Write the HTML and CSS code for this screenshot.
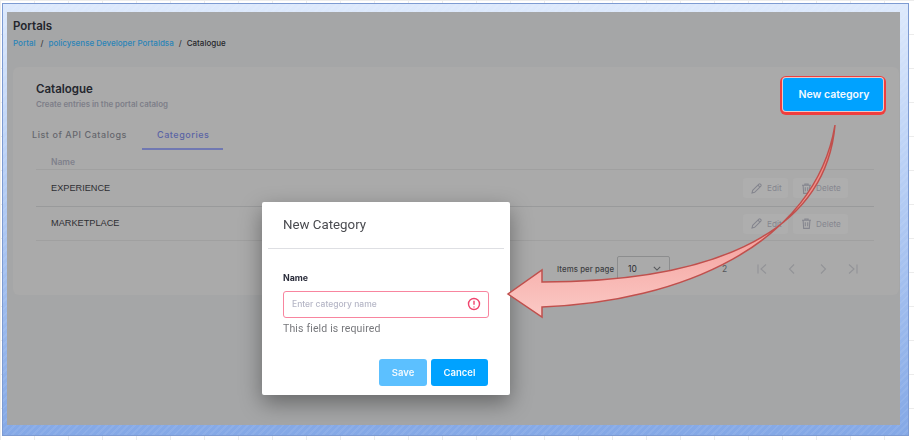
FILE: index.html
```html
<!DOCTYPE html>
<html lang="en">
<head>
<meta charset="utf-8">
<title>Catalogue</title>
<link rel="stylesheet" href="styles.css">
</head>
<body>
<div class="frame">
  <main class="shot">
    <h1 class="page-title">Portals</h1>
    <nav class="crumbs">
      <a>Portal</a><span class="sep">/</span><a>policysense Developer Portaldsa</a><span class="sep">/</span><span class="here">Catalogue</span>
    </nav>
    <section class="card">
      <header class="card-head">
        <div class="card-titles">
          <h2 class="card-title">Catalogue</h2>
          <p class="card-sub">Create entries in the portal catalog</p>
        </div>
        <button class="btn-new">New category</button>
      </header>
      <div class="tabs">
        <span class="tab">List of API Catalogs</span>
        <span class="tab tab-active">Categories</span>
      </div>
      <div class="table">
        <div class="thead">Name</div>
        <div class="row row-tall">
          <span class="cell-name">EXPERIENCE</span>
          <span class="actions">
            <span class="act act-edit"><svg class="ico" viewBox="0 0 16 16"><path d="M2.500 13.500l.8-3.200L11 2.600a1.200 1.200 0 0 1 1.700 0l.7.7a1.200 1.200 0 0 1 0 1.700L5.700 12.700z"/><path d="M9.800 3.800l2.400 2.400"/></svg>Edit</span>
            <span class="act act-del"><svg class="ico" viewBox="0 0 16 16"><path d="M2.500 4h11M6 4V2.500h4V4M3.800 4l.7 10h7l.7-10M6.500 6.500v5M9.500 6.500v5"/></svg>Delete</span>
          </span>
        </div>
        <div class="row row-short">
          <span class="cell-name">MARKETPLACE</span>
          <span class="actions">
            <span class="act act-edit"><svg class="ico" viewBox="0 0 16 16"><path d="M2.500 13.500l.8-3.200L11 2.600a1.200 1.200 0 0 1 1.700 0l.7.7a1.200 1.200 0 0 1 0 1.700L5.700 12.700z"/><path d="M9.800 3.800l2.400 2.400"/></svg>Edit</span>
            <span class="act act-del"><svg class="ico" viewBox="0 0 16 16"><path d="M2.500 4h11M6 4V2.500h4V4M3.800 4l.7 10h7l.7-10M6.500 6.500v5M9.500 6.500v5"/></svg>Delete</span>
          </span>
        </div>
      </div>
      <div class="pager">
        <span class="pager-label">Items per page</span>
        <span class="pager-select">10<svg class="caret" viewBox="0 0 10 6"><path d="M1 1l4 4 4-4"/></svg></span>
        <span class="pager-count">2</span>
        <svg class="pg pg-first" viewBox="0 0 12 12"><path d="M2 1.500v9M10 1.500L5 6l5 4.500"/></svg>
        <svg class="pg pg-prev" viewBox="0 0 12 12"><path d="M8 1.500L3.500 6 8 10.500"/></svg>
        <svg class="pg pg-next" viewBox="0 0 12 12"><path d="M4 1.500L8.500 6 4 10.500"/></svg>
        <svg class="pg pg-last" viewBox="0 0 12 12"><path d="M10 1.500v9M2 1.500L7 6l-5 4.500"/></svg>
      </div>
    </section>
  </main>

  <div class="modal">
    <div class="modal-head">New Category</div>
    <div class="modal-body">
      <label class="field-label">Name</label>
      <div class="input">
        <span class="placeholder">Enter category name</span>
        <svg class="err-ico" viewBox="0 0 14 14"><circle cx="7" cy="7" r="5.500"/><path d="M7 3.800v3.900M7 9.400v1"/></svg>
      </div>
      <p class="err-text">This field is required</p>
      <div class="modal-foot">
        <button class="btn btn-save">Save</button>
        <button class="btn btn-cancel">Cancel</button>
      </div>
    </div>
  </div>
</div>

<svg class="arrow" viewBox="0 0 914 440">
  <defs>
    <linearGradient id="arrowFill" x1="0" y1="0" x2="0" y2="1">
      <stop offset="0" stop-color="#ec7a73"/>
      <stop offset="0.6" stop-color="#f5a5a1"/>
      <stop offset="1" stop-color="#fbcac6"/>
    </linearGradient>
  </defs>
  <path class="arrow-shape" d="M835 125C825 240 700 282 542 282L542 270L508 294L542 317L542 307C680 302 815 245 835 125Z"/>
</svg>
</body>
</html>
```

FILE: styles.css
```css
* { box-sizing: border-box; }
html, body { margin: 0; height: 100%; }
body {
  width: 914px;
  height: 440px;
  overflow: hidden;
  padding: 3px 5px 4px 2px;
  font-family: Inter, "Liberation Sans", sans-serif;
  background-color: #fff;
  background-image:
    linear-gradient(#ececec 1px, transparent 1px),
    linear-gradient(90deg, #ececec 1px, transparent 1px);
  background-size: 34px 34px;
}
h1, h2, p { margin: 0; }
button { font-family: inherit; border: 0; padding: 0; }

.frame {
  position: relative;
  height: 433px;
  padding: 8px 8px 10px 4px;
  border: 1px solid #7d9bd2;
  background:
    repeating-linear-gradient(135deg, rgba(255,255,255,.07) 0 2px, transparent 2px 5px),
    linear-gradient(#dde9fc 0%, #bcd2f6 35%, #84a8e6 100%);
  filter: blur(.4px);
}

.shot {
  height: 413px;
  padding: 8px 1px 0 6px;
  background: #a5a6a7;
}
.page-title { font-size: 11.500px; line-height: 12px; font-weight: 600; color: #23252c; }
.crumbs { display: flex; margin-top: 5px; font-size: 8px; line-height: 12px; font-weight: 500; color: #2a2c30; }
.crumbs a { color: #2a84b8; }
.sep { margin: 0 5px; color: #3b3c40; }
.here { color: #26272b; }

.card {
  height: 228px;
  margin-top: 18px;
  padding: 11px 16px 0 4px;
  border-radius: 6px;
  background: #aaaaaa;
}
.card-head { display: flex; justify-content: space-between; align-items: flex-start; padding-left: 19px; }
.card-titles { padding-top: 4px; }
.card-title { font-size: 11.500px; line-height: 14px; font-weight: 600; color: #24262e; }
.card-sub { margin-top: 3px; font-size: 7.900px; line-height: 10px; font-weight: 600; color: #7d7e88; }
.btn-new {
  width: 100px;
  height: 33px;
  padding-left: 2px;
  border-radius: 3px;
  background: #00a2ff;
  color: #f2f9ff;
  font-size: 10.500px;
  font-weight: 600;
  box-shadow: 0 0 0 1px #e9c9c9, 0 1px 0 3px #f03e3e;
}

.tabs { display: flex; margin-top: 14px; font-size: 9px; line-height: 12px; letter-spacing: .55px; font-weight: 500; }
.tab { padding: 4px 15px 7px; color: #66676d; }
.tab-active { padding-right: 14px; color: #5a64a5; border-bottom: 2px solid #7078b2; }

.table { margin: 0 9px 0 19px; }
.thead {
  height: 20px;
  padding: 6px 0 0 15px;
  font-size: 8.500px;
  line-height: 12px;
  font-weight: 600;
  color: #7f818c;
  border-bottom: 1px solid #a0a0a0;
}
.row {
  display: flex;
  align-items: center;
  justify-content: space-between;
  padding: 0 26px 0 15px;
  border-bottom: 1px solid #999a9b;
}
.row-tall { height: 37px; }
.row-short { height: 34px; border-bottom-color: #a0a0a0; }
.cell-name { margin-bottom: 1px; font-family: "Liberation Sans", Arial, sans-serif; font-size: 9.200px; color: #2e2f33; }
.actions { display: flex; gap: 5px; }
.act {
  display: flex;
  align-items: center;
  height: 20px;
  border-radius: 3px;
  background: #aeaeae;
  font-size: 8.200px;
  color: #85868f;
}
.act-edit { width: 45px; padding-left: 7px; gap: 4px; }
.act-del { width: 55px; padding-left: 7px; gap: 3px; }
.ico { width: 13px; height: 13px; fill: none; stroke: #84858e; stroke-width: 1.300; }

.pager { display: flex; align-items: center; height: 55px; padding-right: 16px; margin-left: 540px; }
.pager-label { width: 60px; font-size: 7.800px; font-weight: 500; letter-spacing: .1px; color: #3d3e42; white-space: nowrap; }
.pager-select {
  display: flex;
  align-items: center;
  justify-content: space-between;
  width: 53px;
  height: 25px;
  padding: 0 8px 0 10px;
  border: 1px solid #8c8d8e;
  border-radius: 2px;
  font-size: 8.500px;
  color: #2e2f33;
}
.caret { width: 8px; height: 5px; fill: none; stroke: #55565a; stroke-width: 1.300; }
.pager-count { margin-left: 52px; width: 34px; font-size: 8.500px; color: #55565a; }
.pg { width: 12px; height: 12px; fill: none; stroke: #929397; stroke-width: 1.100; }
.pg-prev { margin-left: 18px; }
.pg-next { margin-left: 19px; }
.pg-last { margin-left: 18px; }

.modal {
  position: absolute;
  left: 259px;
  top: 198px;
  width: 248px;
  height: 193px;
  border-radius: 2px;
  background: #fff;
  box-shadow: 0 8px 22px rgba(0,0,0,.38);
}
.modal-head {
  display: flex;
  align-items: center;
  height: 47px;
  margin: 0 6px;
  padding: 0 0 1px 15px;
  border-bottom: 1px solid #dedfe3;
  font-family: Roboto, "Liberation Sans", sans-serif;
  font-size: 13.300px;
  color: #4a4b50;
}
.modal-body { padding: 23px 21px 0; }
.field-label { display: block; font-size: 8.800px; line-height: 12px; font-weight: 700; color: #2c2e3c; }
.input {
  display: flex;
  align-items: center;
  justify-content: space-between;
  height: 27px;
  margin-top: 7px;
  padding: 0 7px 1px 8px;
  border: 1px solid #f8859f;
  border-radius: 3px;
}
.placeholder { font-size: 8.500px; font-weight: 500; color: #b5b6c6; }
.err-ico { width: 14px; height: 14px; fill: none; stroke: #f0446d; stroke-width: 1.400; }
.err-text { margin-top: 5px; font-family: Roboto, "Liberation Sans", sans-serif; font-size: 10.500px; line-height: 12px; letter-spacing: .15px; color: #77787c; }
.modal-foot { display: flex; justify-content: flex-end; gap: 4px; margin: 24px 1px 0 0; }
.btn { height: 27px; border-radius: 3px; color: #f3faff; font-size: 9.500px; font-weight: 600; }
.btn-save { width: 48px; background: #5cc0ff; }
.btn-cancel { width: 57px; background: #00a2ff; }

.arrow { position: absolute; left: 0; top: 0; width: 914px; height: 440px; pointer-events: none; filter: blur(.3px); }
.arrow-shape { fill: url(#arrowFill); stroke: #c0504d; stroke-width: 1.500; stroke-linejoin: miter; }
```
